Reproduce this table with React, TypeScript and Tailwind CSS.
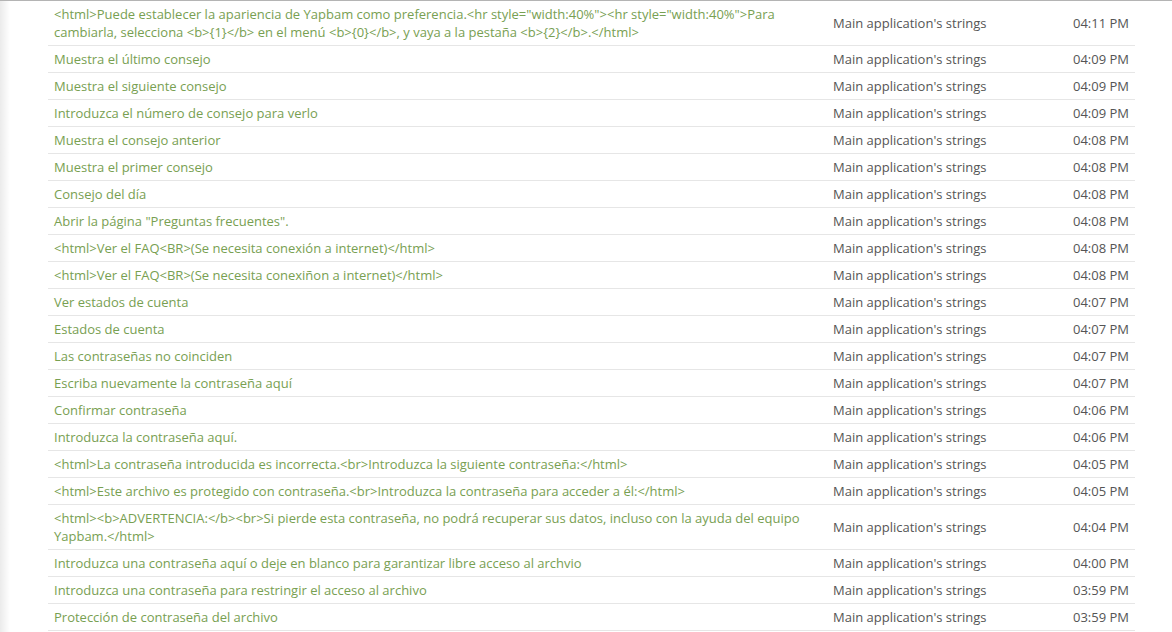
import React from "react";

const rows: [string, string][] = [
  [
    '<html>Puede establecer la apariencia de Yapbam como preferencia.<hr style="width:40%"><hr style="width:40%">Para cambiarla, selecciona <b>{1}</b> en el menú <b>{0}</b>, y vaya a la pestaña <b>{2}</b>.</html>',
    "04:11 PM",
  ],
  ["Muestra el último consejo", "04:09 PM"],
  ["Muestra el siguiente consejo", "04:09 PM"],
  ["Introduzca el número de consejo para verlo", "04:09 PM"],
  ["Muestra el consejo anterior", "04:08 PM"],
  ["Muestra el primer consejo", "04:08 PM"],
  ["Consejo del día", "04:08 PM"],
  ['Abrir la página "Preguntas frecuentes".', "04:08 PM"],
  ["<html>Ver el FAQ<BR>(Se necesita conexión a internet)</html>", "04:08 PM"],
  ["<html>Ver el FAQ<BR>(Se necesita conexiñon a internet)</html>", "04:08 PM"],
  ["Ver estados de cuenta", "04:07 PM"],
  ["Estados de cuenta", "04:07 PM"],
  ["Las contraseñas no coinciden", "04:07 PM"],
  ["Escriba nuevamente la contraseña aquí", "04:07 PM"],
  ["Confirmar contraseña", "04:06 PM"],
  ["Introduzca la contraseña aquí.", "04:06 PM"],
  ["<html>La contraseña introducida es incorrecta.<br>Introduzca la siguiente contraseña:</html>", "04:05 PM"],
  ["<html>Este archivo es protegido con contraseña.<br>Introduzca la contraseña para acceder a él:</html>", "04:05 PM"],
  [
    "<html><b>ADVERTENCIA:</b><br>Si pierde esta contraseña, no podrá recuperar sus datos, incluso con la ayuda del equipo Yapbam.</html>",
    "04:04 PM",
  ],
  ["Introduzca una contraseña aquí o deje en blanco para garantizar libre acceso al archvio", "04:00 PM"],
  ["Introduzca una contraseña para restringir el acceso al archivo", "03:59 PM"],
  ["Protección de contraseña del archivo", "03:59 PM"],
];

const App = () => {
  return (
    <div
      className="flex h-[632px] w-full overflow-hidden border-t border-[#b4b4b4] bg-white text-[13px] leading-[18px]"
      style={{ fontFamily: '"Open Sans", "Noto Sans", sans-serif' }}
    >
      <div className="w-[10px] shrink-0 bg-gradient-to-r from-[#ebebeb] to-white" />
      <div className="pl-[38px] pr-[37px] flex-1">
        <table className="w-full border-collapse">
          <tbody>
            {rows.map(([text, time], i) => (
              <tr key={i} className="border-b border-[#e6e6e6]">
                <td className="py-[4px] px-[6px] align-middle text-[#78a052]">{text}</td>
                <td className="w-[208px] py-[4px] px-[6px] align-middle text-[#555555] whitespace-nowrap">
                  Main application's strings
                </td>
                <td className="w-[100px] py-[4px] px-[6px] align-middle text-right text-[#555555] whitespace-nowrap">
                  {time}
                </td>
              </tr>
            ))}
          </tbody>
        </table>
      </div>
    </div>
  );
};

export default App;
